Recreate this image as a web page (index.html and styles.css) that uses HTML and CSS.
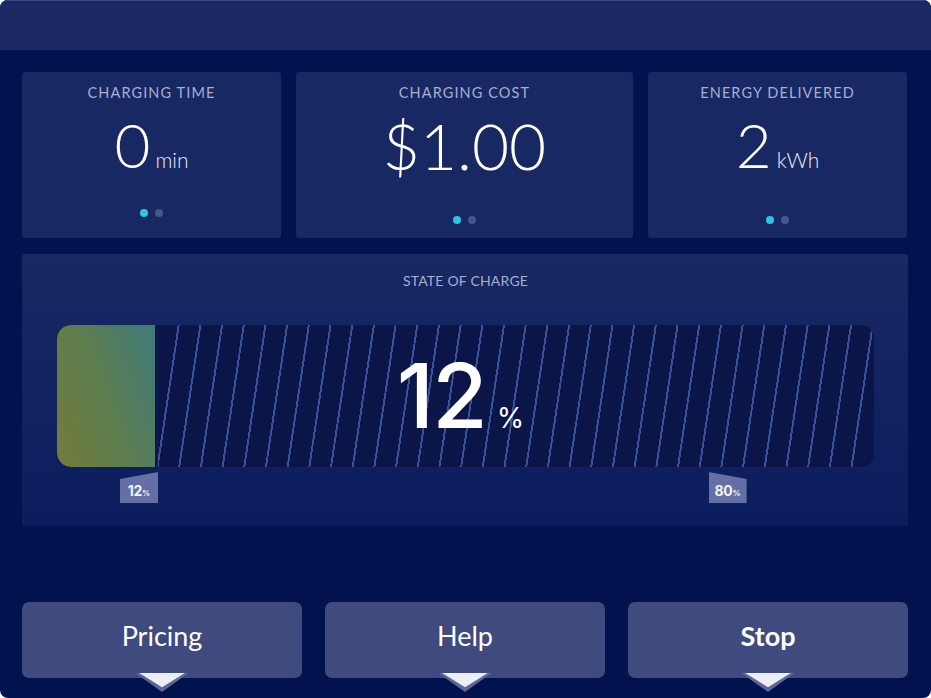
FILE: index.html
```html
<!DOCTYPE html>
<html>
<head>
<meta charset="utf-8">
<link rel="stylesheet" href="styles.css">
</head>
<body>
<div class="screen">
  <header class="topbar"></header>
  <main class="content">
    <section class="stats">
      <div class="card card-first">
        <div class="label">CHARGING TIME</div>
        <div class="value"><span class="num">0</span><span class="unit">min</span></div>
        <div class="dots"><span class="dot on"></span><span class="dot"></span></div>
      </div>
      <div class="card">
        <div class="label">CHARGING COST</div>
        <div class="value"><span class="num big">$1.00</span></div>
        <div class="dots"><span class="dot on"></span><span class="dot"></span></div>
      </div>
      <div class="card">
        <div class="label">ENERGY DELIVERED</div>
        <div class="value"><span class="num">2</span><span class="unit">kWh</span></div>
        <div class="dots"><span class="dot on"></span><span class="dot"></span></div>
      </div>
    </section>

    <section class="soc">
      <div class="soc-label">STATE OF CHARGE</div>
      <div class="track-wrap">
        <div class="track">
          <div class="fill" style="width: 12%"></div>
          <div class="stripes"></div>
          <div class="soc-value"><span class="soc-num">12</span><span class="soc-pct">%</span></div>
        </div>
        <div class="markers">
          <div class="tag tag-current" style="left: 12%"><b>12</b><small>%</small></div>
          <div class="tag tag-limit" style="left: 80%"><b>80</b><small>%</small></div>
        </div>
      </div>
    </section>

    <nav class="actions">
      <button class="btn">Pricing<svg class="arrow" viewBox="0 0 56 20"><polygon points="0,0 56,0 28,20" fill="#5c6697"/><polygon points="4,0 52,0 28,15" fill="#eceef6"/></svg></button>
      <button class="btn">Help<svg class="arrow" viewBox="0 0 56 20"><polygon points="0,0 56,0 28,20" fill="#5c6697"/><polygon points="4,0 52,0 28,15" fill="#eceef6"/></svg></button>
      <button class="btn btn-strong">Stop<svg class="arrow" viewBox="0 0 56 20"><polygon points="0,0 56,0 28,20" fill="#5c6697"/><polygon points="4,0 52,0 28,15" fill="#eceef6"/></svg></button>
    </nav>
  </main>
</div>
</body>
</html>
```

FILE: styles.css
```css
html, body {
  margin: 0;
  padding: 0;
  background: #ffffff;
}

.screen {
  width: 931px;
  height: 698px;
  border-radius: 8px;
  overflow: hidden;
  background: #02124f;
  font-family: "Lato", "Open Sans", sans-serif;
  color: #ffffff;
  display: flex;
  flex-direction: column;
}

.topbar {
  height: 50px;
  flex: none;
  background: #1b2a63;
  border-top: 1px solid #3a4a82;
  box-sizing: border-box;
}

.content {
  display: flex;
  flex-direction: column;
  padding: 0 23px 0 22px;
}

.stats {
  margin-top: 22px;
  display: grid;
  grid-template-columns: 259px 337px 259px;
  column-gap: 15px;
}

.card {
  height: 166px;
  background: #172862;
  border-radius: 3px;
  display: flex;
  flex-direction: column;
  align-items: center;
}

.label {
  margin-top: 12px;
  font-size: 14.5px;
  line-height: 17px;
  letter-spacing: 1.1px;
  color: #a7aed0;
}

.value {
  margin-top: 13px;
  height: 60px;
  display: flex;
  align-items: baseline;
  line-height: 60px;
}

.num {
  font-size: 62px;
  font-weight: 300;
}

.num.big {
  font-size: 64px;
  position: relative;
  top: 2px;
}

.unit {
  font-size: 21px;
  font-weight: 300;
  margin-left: 5px;
  color: #e8eaf4;
}

.dots {
  margin-top: auto;
  margin-bottom: 14px;
  display: flex;
  gap: 7px;
}

.card-first .dots {
  margin-bottom: 21px;
}

.dot {
  width: 8px;
  height: 8px;
  border-radius: 50%;
  background: #4a5688;
}

.dot.on {
  background: #2ec3e3;
}

.soc {
  margin-top: 16px;
  height: 272px;
  background: linear-gradient(180deg, #172862 0%, #0c1d5e 100%);
  border-radius: 3px;
  display: flex;
  flex-direction: column;
  align-items: stretch;
  padding: 0 34px 0 35px;
}

.soc-label {
  margin-top: 19px;
  text-align: center;
  font-size: 14px;
  line-height: 16px;
  letter-spacing: 0.2px;
  color: #a7aed0;
}

.track-wrap {
  margin-top: 36px;
  display: flex;
  flex-direction: column;
}

.track {
  position: relative;
  height: 142px;
  border-radius: 14px;
  overflow: hidden;
  display: flex;
  background: #0a1448;
}

.fill {
  flex: none;
  height: 100%;
  background: linear-gradient(70deg, #747c3a 0%, #5c7d4f 50%, #3f7a7c 100%);
  border-radius: 14px 0 0 14px;
}

.stripes {
  flex: 1;
  margin-left: 2px;
  background-color: #0b1547;
  background-image: repeating-linear-gradient(98.5deg, transparent 0 19.5px, rgba(70, 96, 176, 0.8) 19.5px 21.45px);
  border-left: 1px solid #10204f;
}

.soc-value {
  position: absolute;
  inset: 0;
  display: flex;
  align-items: baseline;
  justify-content: center;
  padding-top: 26px;
  padding-right: 10px;
  line-height: 90px;
  box-sizing: border-box;
}

.soc-num {
  font-family: "Inter", "Lato", sans-serif;
  font-size: 90px;
  font-weight: 500;
  letter-spacing: -2px;
}

.soc-pct {
  font-family: "Inter", "Lato", sans-serif;
  font-size: 28px;
  font-weight: 400;
  margin-left: 11px;
}

.markers {
  position: relative;
  height: 36px;
}

.tag {
  position: absolute;
  top: 5px;
  width: 38px;
  height: 31px;
  background: #6470a5;
  box-sizing: border-box;
  padding-top: 11px;
  text-align: center;
  font-family: "Inter", "Lato", sans-serif;
  line-height: 14px;
  color: #f2f3f8;
}

.tag b {
  font-size: 14px;
  font-weight: 700;
  letter-spacing: -0.3px;
}

.tag small {
  font-size: 8px;
  font-weight: 700;
}

.tag-current {
  transform: translateX(-35px);
  clip-path: polygon(0 7px, 100% 0, 100% 100%, 0 100%);
}

.tag-limit {
  transform: translateX(-2px);
  clip-path: polygon(0 0, 100% 7px, 100% 100%, 0 100%);
}

.actions {
  margin-top: 76px;
  display: grid;
  grid-template-columns: 280px 280px 280px;
  column-gap: 23px;
}

.btn {
  position: relative;
  height: 76px;
  border: none;
  border-radius: 7px;
  background: #3f4a7e;
  color: #ffffff;
  font-family: "Lato", "Open Sans", sans-serif;
  font-size: 27px;
  font-weight: 400;
  padding: 0 0 10px 0;
}

.btn-strong {
  font-weight: 700;
}

.arrow {
  position: absolute;
  left: 50%;
  bottom: -14px;
  width: 56px;
  height: 19px;
  transform: translateX(-50%);
}
```
